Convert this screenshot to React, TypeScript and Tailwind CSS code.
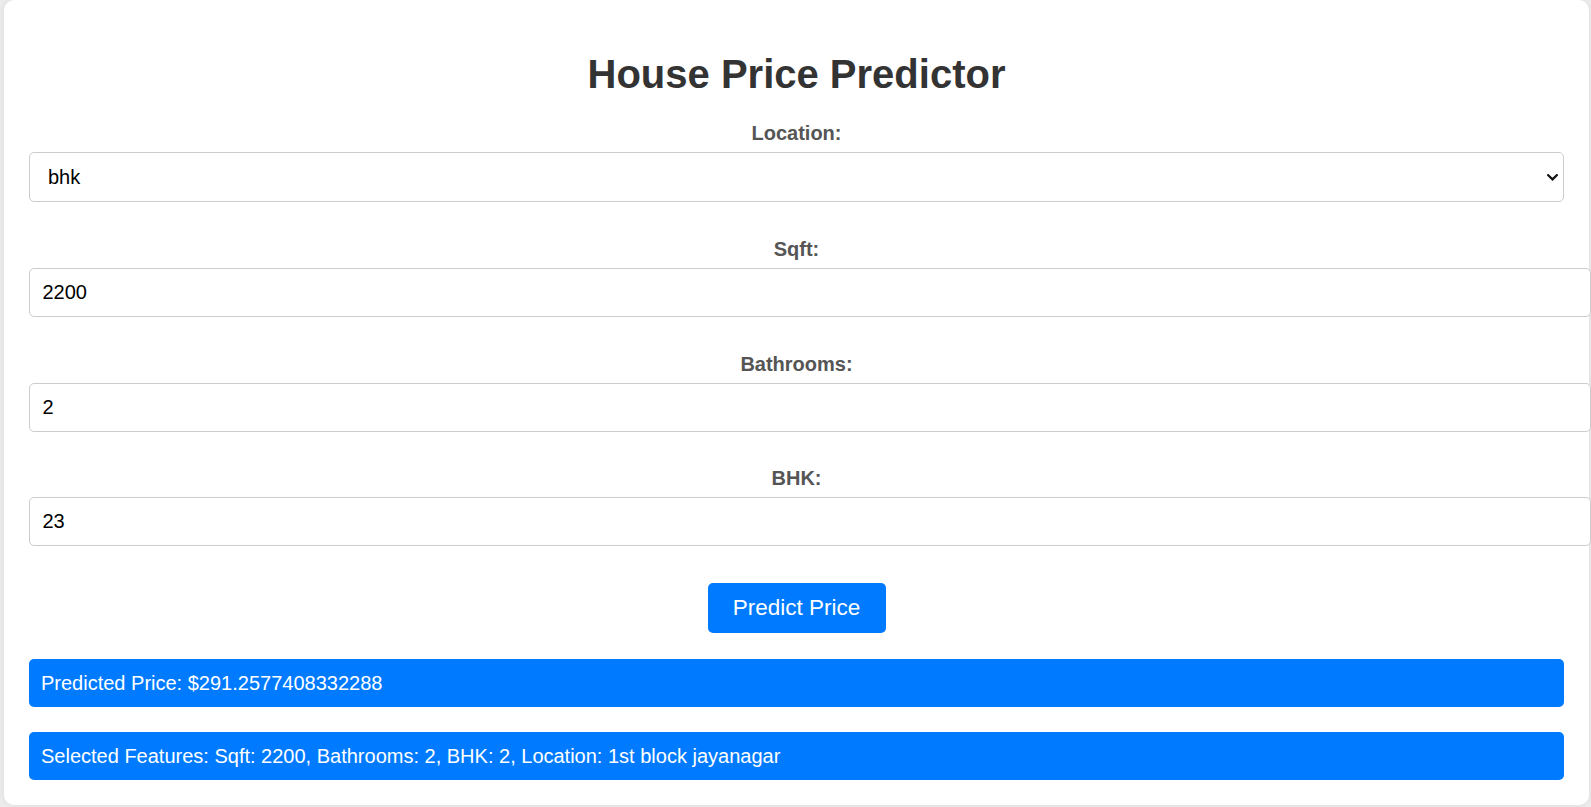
import React from "react";

export default function App() {
  return (
    <div className="min-h-screen w-full overflow-x-hidden bg-[#ededed] font-['Liberation_Sans',Arial,sans-serif]">
      <div className="ml-[4px] w-[1585px] rounded-[10px] bg-white px-[25px] pt-[51px] pb-[25px] shadow-[0_0_8px_rgba(0,0,0,0.08)]">
        <h1 className="mb-[25px] text-center text-[40px] font-bold leading-[46px] text-[#333333]">
          House Price Predictor
        </h1>

        <label className="mb-[7px] block text-center text-[20px] font-bold leading-[23px] text-[#555555]">
          Location:
        </label>
        <div className="relative mb-[36px] h-[50px] w-full">
          <select
            defaultValue="bhk"
            className="h-[50px] w-full appearance-none rounded-[5px] border border-[#cccccc] bg-white pl-[18px] text-[20px] leading-[23px] text-black outline-none"
          >
            <option value="bhk">bhk</option>
            <option value="1st block jayanagar">1st block jayanagar</option>
          </select>
          <svg
            className="pointer-events-none absolute right-[6px] top-[22px] h-[7px] w-[11px]"
            viewBox="0 0 11 7"
            fill="none"
          >
            <path d="M1.2 1.2 L5.5 5.4 L9.8 1.2" stroke="#111" strokeWidth="2.2" strokeLinecap="square" />
          </svg>
        </div>

        <label className="mb-[7px] block text-center text-[20px] font-bold leading-[23px] text-[#555555]">
          Sqft:
        </label>
        <input
          type="text"
          defaultValue="2200"
          className="mb-[35.5px] box-content block h-[47px] w-full rounded-[5px] border border-[#cccccc] bg-white px-[12.5px] py-0 text-[20px] text-black outline-none"
        />

        <label className="mb-[7px] block text-center text-[20px] font-bold leading-[23px] text-[#555555]">
          Bathrooms:
        </label>
        <input
          type="text"
          defaultValue="2"
          className="mb-[35.5px] box-content block h-[47px] w-full rounded-[5px] border border-[#cccccc] bg-white px-[12.5px] py-0 text-[20px] text-black outline-none"
        />

        <label className="mb-[7px] block text-center text-[20px] font-bold leading-[23px] text-[#555555]">
          BHK:
        </label>
        <input
          type="text"
          defaultValue="23"
          className="mb-[37px] box-content block h-[47px] w-full rounded-[5px] border border-[#cccccc] bg-white px-[12.5px] py-0 text-[20px] text-black outline-none"
        />

        <div className="mb-[26px] flex justify-center">
          <button className="flex h-[50px] w-[178px] items-center justify-center rounded-[5px] bg-[#007bff] text-[22.5px] leading-[26px] text-white">
            Predict Price
          </button>
        </div>

        <div className="mb-[25px] flex h-[48px] items-center rounded-[5px] bg-[#007bff] px-[12px] text-[20px] leading-[23px] text-white">
          Predicted Price: $291.2577408332288
        </div>
        <div className="flex h-[48px] items-center rounded-[5px] bg-[#007bff] px-[12px] text-[20px] leading-[23px] text-white">
          Selected Features: Sqft: 2200, Bathrooms: 2, BHK: 2, Location: 1st block jayanagar
        </div>
      </div>
    </div>
  );
}
